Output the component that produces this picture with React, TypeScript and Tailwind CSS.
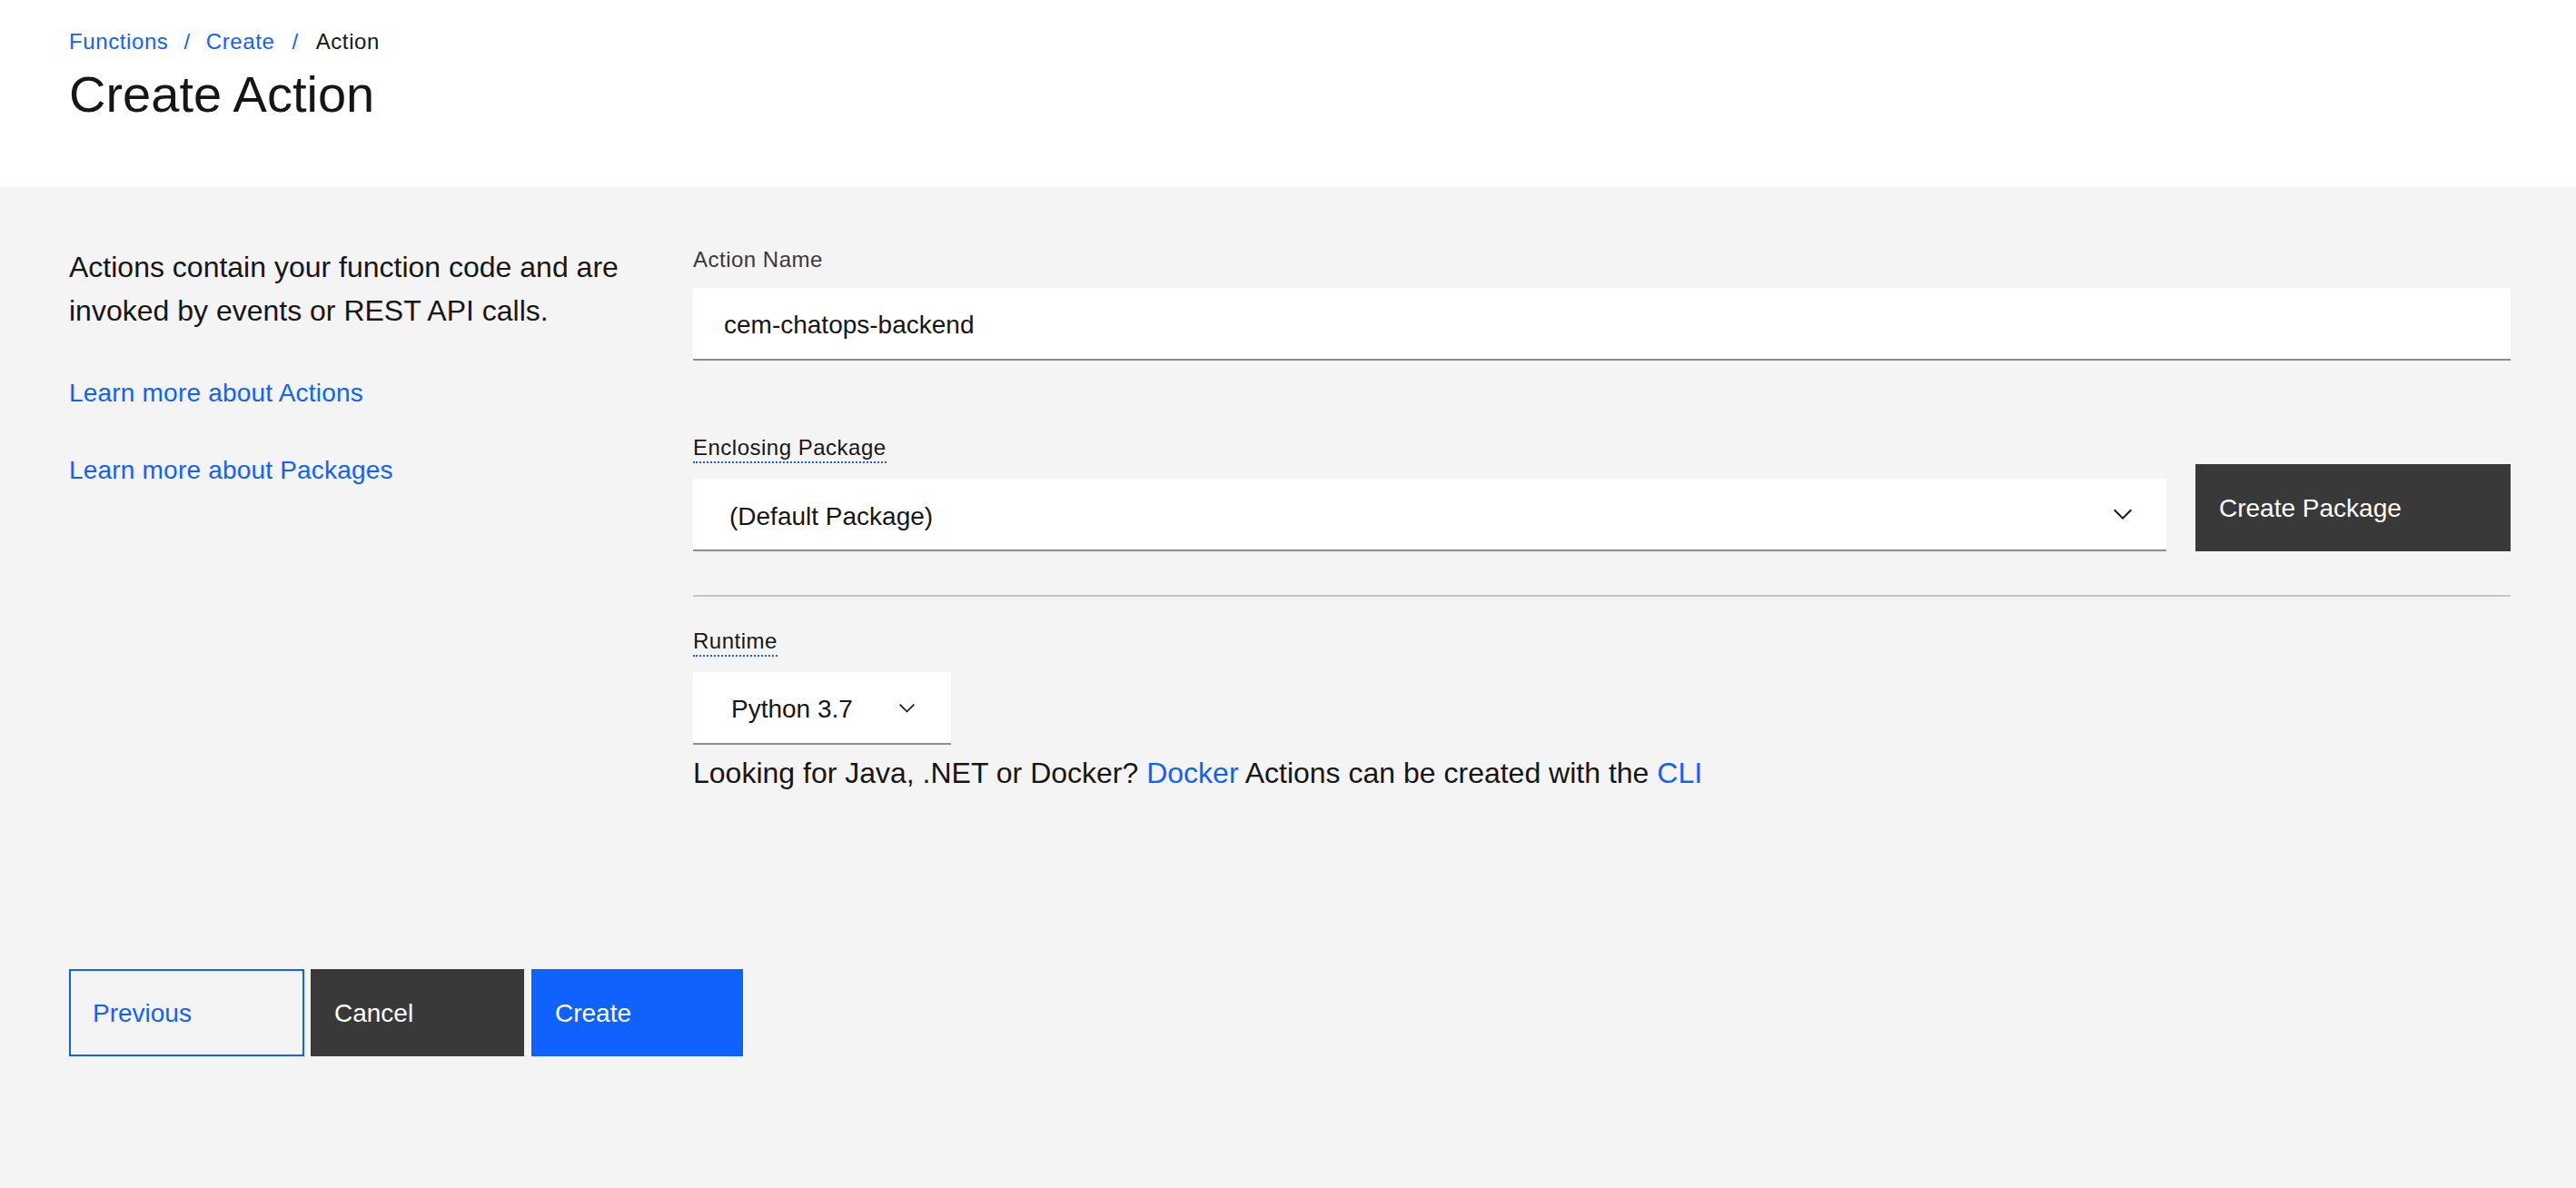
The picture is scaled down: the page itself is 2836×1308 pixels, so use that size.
import React from 'react';

function Chevron({ className }: { className: string }) {
  return (
    <svg viewBox="0 0 16 16" className={className} fill="currentColor" aria-hidden="true">
      <path d="M8 11L3 6l.7-.7L8 9.6l4.3-4.3.7.7z" />
    </svg>
  );
}

function FieldLabel({ children, dotted = false, className = '' }: { children: React.ReactNode; dotted?: boolean; className?: string }) {
  if (dotted) {
    return (
      <div className={className}>
        <span className="inline-block border-b-2 border-dotted border-[#0f62fe] text-[24px] leading-[30px] tracking-[0.5px] text-[#161616]">{children}</span>
      </div>
    );
  }
  return <div className={`text-[24px] leading-[32px] tracking-[0.5px] text-[#393939] ${className}`}>{children}</div>;
}

export default function App() {
  return (
    <div className="flex min-h-screen w-full flex-col bg-[#f4f4f4] font-['Liberation_Sans',Arial,sans-serif] text-[#161616]">
      <header className="h-[206px] bg-white px-[76px] pt-[28px]">
        <nav className="flex items-center text-[24px] leading-[36px] tracking-[0.6px]">
          <a className="text-[#0f62fe]">Functions</a>
          <span className="mx-[17px] text-[#0f62fe]">/</span>
          <a className="text-[#0f62fe]">Create</a>
          <span className="mx-[19px] text-[#0f62fe]">/</span>
          <span className="text-[#161616]">Action</span>
        </nav>
        <h1 className="mt-[4px] text-[56px] font-normal leading-[72px]">Create Action</h1>
      </header>

      <main className="flex-1 pl-[76px] pr-[72px] pt-[64px]">
        <div className="flex">
          <aside className="w-[687px] shrink-0">
            <p className="max-w-[640px] text-[32px] leading-[48px]">
              Actions contain your function code and are invoked by events or REST API calls.
            </p>
            <a className="mt-[47px] block text-[28px] leading-[40px] tracking-[0.2px] text-[#0f62fe]">Learn more about Actions</a>
            <a className="mt-[45px] block text-[28px] leading-[40px] tracking-[0.2px] text-[#0f62fe]">Learn more about Packages</a>
          </aside>

          <section className="flex-1">
            <FieldLabel>Action Name</FieldLabel>
            <div className="mt-[15px] box-border flex h-[80px] items-center border-b-2 border-[#8d8d8d] bg-white pl-[34px] pt-[4px] text-[28px]">
              cem-chatops-backend
            </div>

            <div className="mt-[81px] flex items-end gap-[32px]">
              <div className="flex-1">
                <FieldLabel dotted>Enclosing Package</FieldLabel>
                <div className="mt-[17px] box-border flex h-[80px] items-center justify-between border-b-2 border-[#8d8d8d] bg-white pl-[40px] pr-[32px] text-[28px]">
                  <span className="pt-[6px]">(Default Package)</span>
                  <Chevron className="h-[32px] w-[32px] text-[#161616]" />
                </div>
              </div>
              <button className="flex h-[96px] w-[347px] items-center bg-[#393939] pl-[26px] pt-[2px] text-[28px] text-white">
                Create Package
              </button>
            </div>

            <div className="mt-[48px] h-[2px] bg-[#c1c7d0]" />

            <FieldLabel dotted className="mt-[34px]">Runtime</FieldLabel>
            <div className="mt-[17px] box-border flex h-[80px] w-[284px] items-center justify-between border-b-2 border-[#8d8d8d] bg-white pl-[42px] pr-[35px] text-[28px]">
              <span className="pt-[3px]">Python 3.7</span>
              <Chevron className="h-[27px] w-[27px] text-[#161616]" />
            </div>
            <p className="mt-[7px] text-[32px] leading-[48px]">
              Looking for Java, .NET or Docker? <a className="text-[#0f62fe]">Docker</a> Actions can be created with the{' '}
              <a className="text-[#0f62fe]">CLI</a>
            </p>
          </section>
        </div>

        <div className="mt-[192px] flex gap-[7px]">
          <button className="box-border flex h-[96px] w-[259px] items-center border-2 border-[#0f62fe] pl-[24px] pt-[2px] text-[28px] text-[#0f62fe]">
            Previous
          </button>
          <button className="flex h-[96px] w-[235px] items-center bg-[#393939] pl-[26px] pt-[2px] text-[28px] text-white">
            Cancel
          </button>
          <button className="ml-[1px] flex h-[96px] w-[233px] items-center bg-[#0f62fe] pl-[26px] pt-[2px] text-[28px] text-white">
            Create
          </button>
        </div>
      </main>
    </div>
  );
}
